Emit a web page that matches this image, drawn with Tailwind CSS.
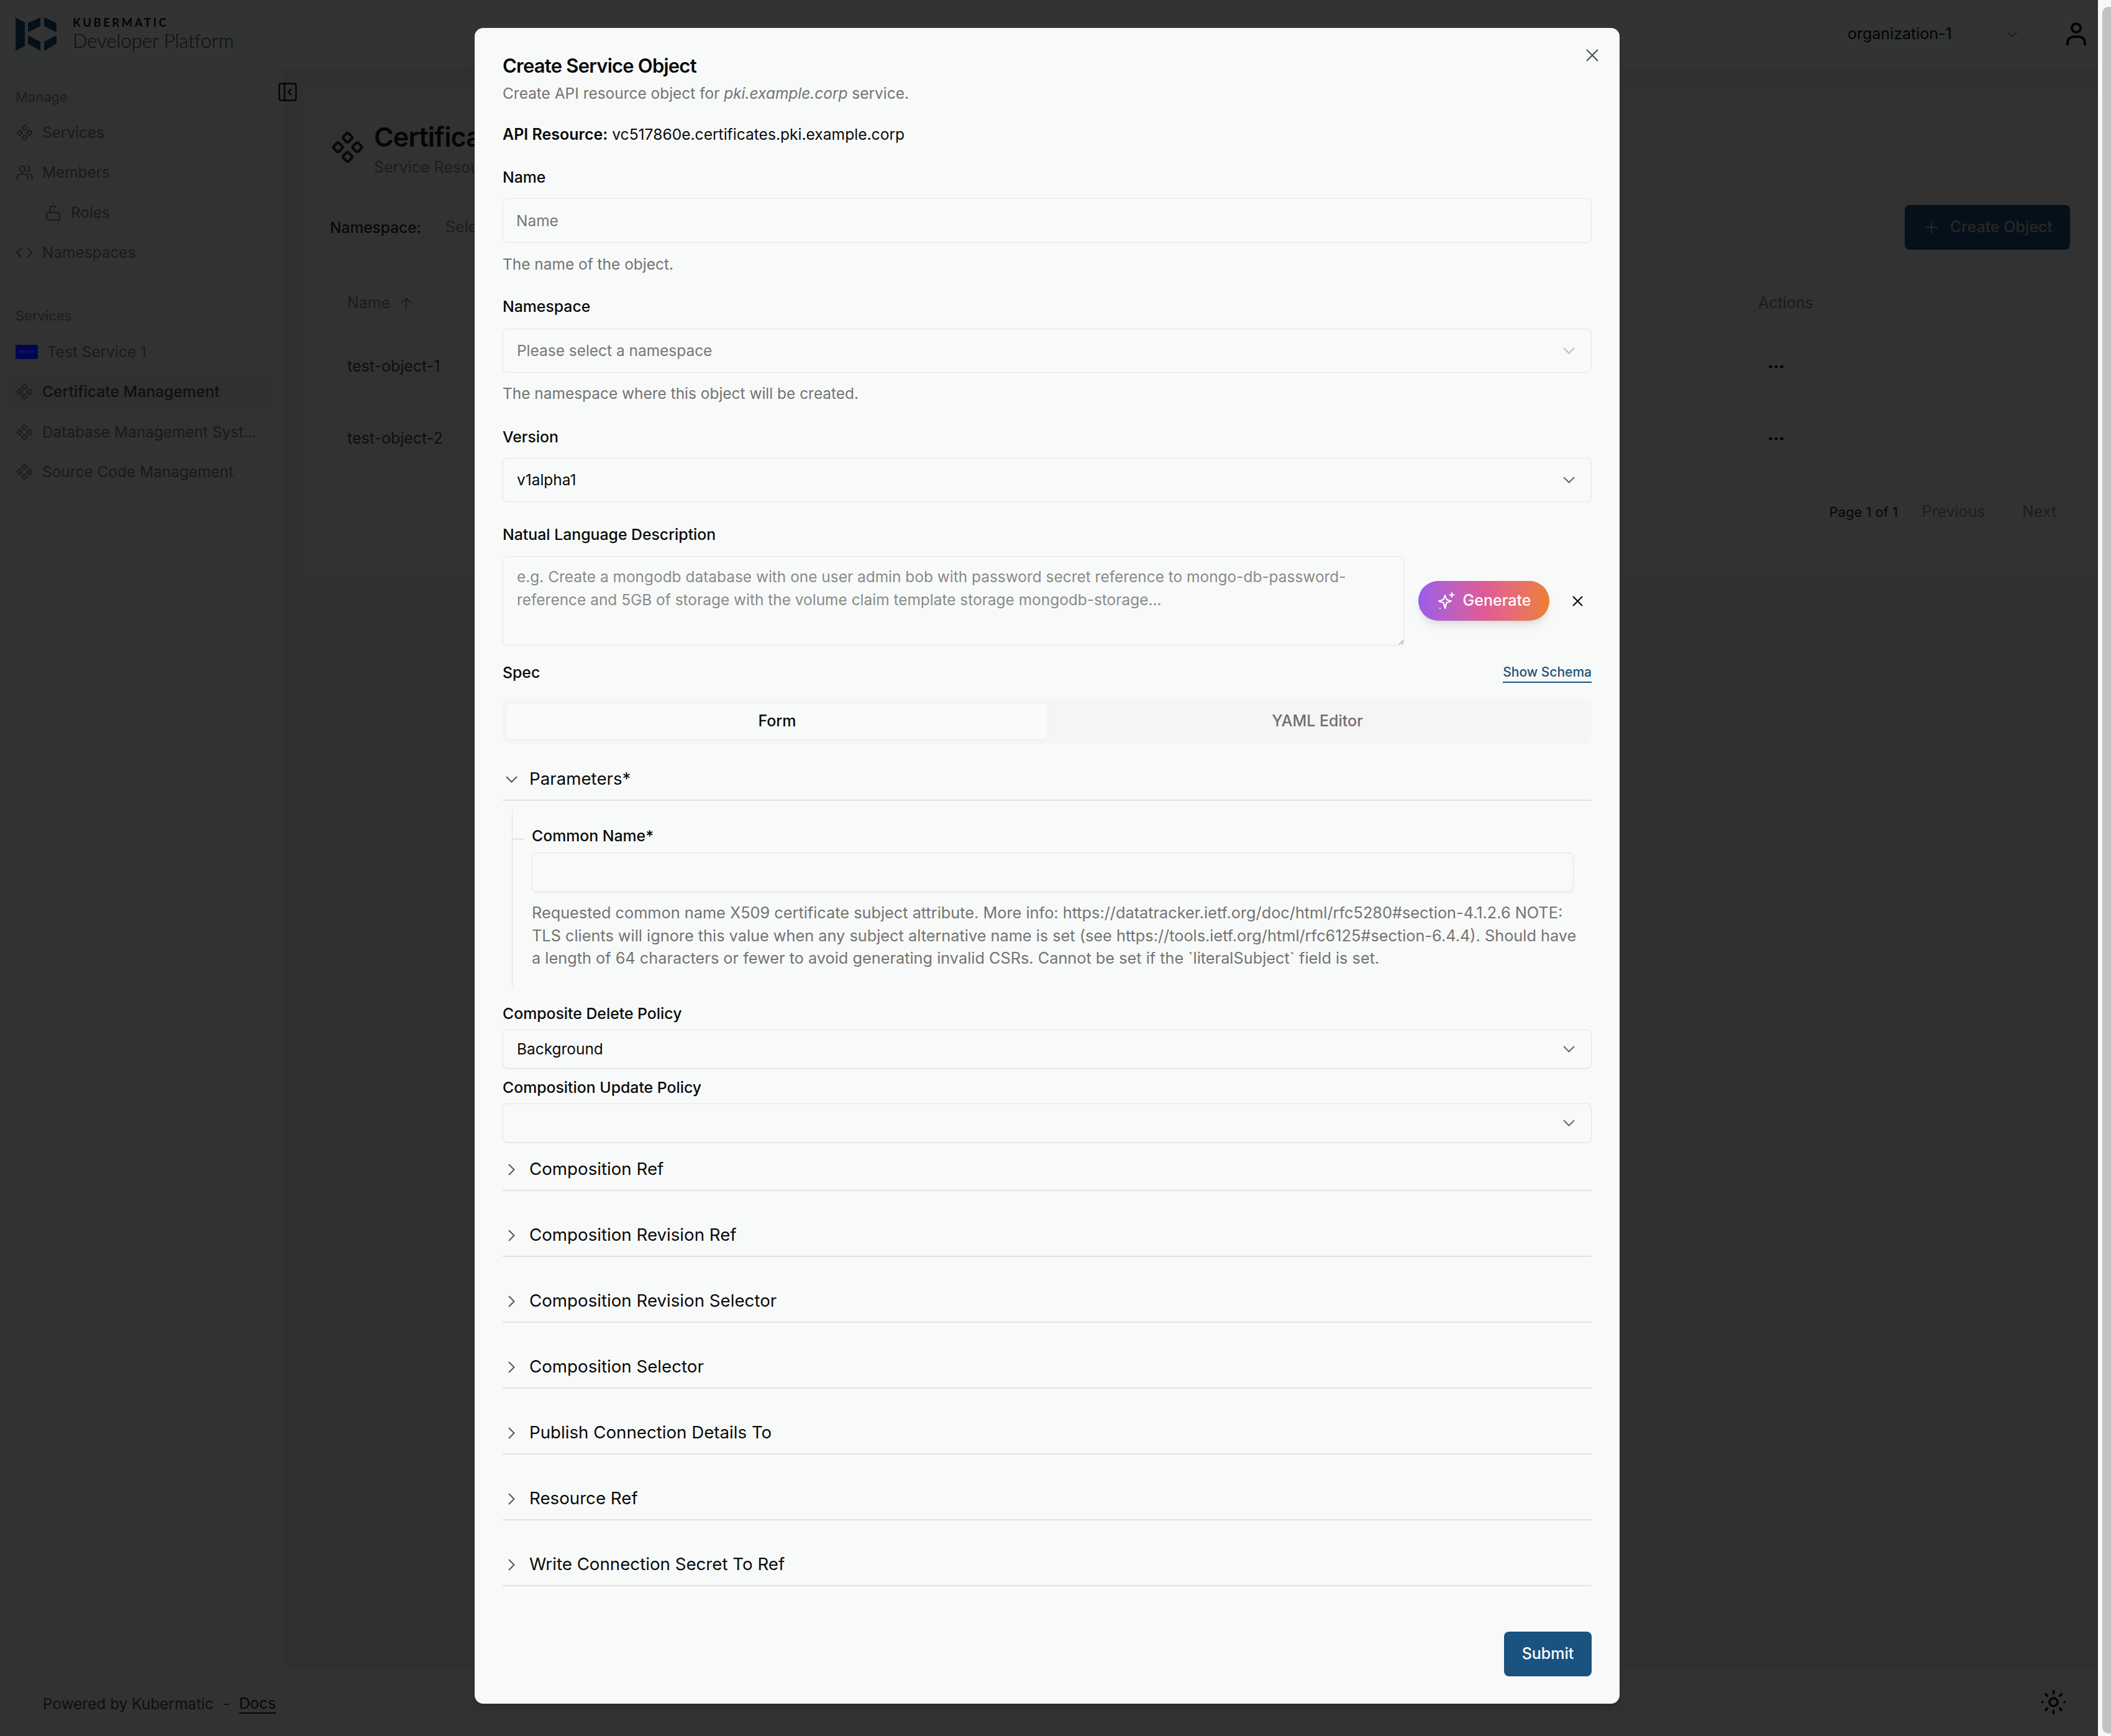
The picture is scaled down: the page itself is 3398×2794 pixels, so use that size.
<!DOCTYPE html>
<html><head><meta charset="utf-8"><script src="https://cdn.jsdelivr.net/npm/@tailwindcss/browser@4"></script></head>
<body class="m-0 bg-[#f7f9f8] font-['Inter',sans-serif] overflow-hidden">
<div class="relative w-[3398px] h-[2794px] overflow-hidden">
  <div class="relative w-[3377px] h-[2794px] flex flex-col bg-[#f0f0f0]">
    <header class="h-[111px] shrink-0 flex items-center bg-[#fbfdfc] border-b border-[#e8e8e8] pl-[25px] pr-[19px]">
      <svg class="w-[66px] h-[54px] shrink-0" viewBox="0 0 66 54" fill="#1a5280"><polygon points="0,0 15,8 15,46 0,54"/><polygon points="20,9 40,0 40,14 20,24"/><polygon points="20,29 40,39 40,54 20,42"/><polygon points="46,0 66,9 66,24 46,14"/><polygon points="46,39 66,29 66,42 46,54"/></svg>
      <div class="ml-[26px] flex flex-col font-['Lato',sans-serif] text-[#3f3f3f]">
        <span class="text-[18.500px] leading-[20px] font-bold tracking-[0.19em] text-[#0e1114]">KUBERMATIC</span>
        <span class="text-[31px] leading-[38px] font-light">Developer Platform</span>
      </div>
      <div class="ml-auto w-[323px] h-[71px] flex items-center justify-between rounded-[8px] border border-[#e6e6e6] pl-[22px] pr-[24px] text-[25px] text-[#111]">
        <span>organization-1</span>
        <svg class="w-[20px] h-[20px] text-[#777]" viewBox="0 0 24 24" fill="none" stroke="currentColor" stroke-width="2"><path d="m3 8 9 9 9-9"/></svg>
      </div>
      <svg class="ml-[52px] w-[32px] h-[38px] text-[#111]" viewBox="0 0 32 38" fill="none" stroke="currentColor" stroke-width="4"><circle cx="16" cy="9" r="7"/><path d="M2 37v-4a10 10 0 0 1 10-10h8a10 10 0 0 1 10 10v4"/></svg>
    </header>
    <div class="flex-1 flex min-h-0">
      <aside class="relative w-[457px] shrink-0 border-r border-[#e6e6e6] bg-[#fafafa] pt-[30px] text-[24.400px] text-[#808080]">
        <div class="h-[30px] pl-[25px] flex items-center text-[22px] text-[#8f8f8f]">Manage</div>
        <nav class="mt-[10px]">
          <div class="h-[64.500px] pl-[26px] flex items-center gap-[15px]"><svg class="w-[27px] h-[27px]" viewBox="0 0 24 24" fill="none" stroke="currentColor" stroke-width="1.8"><rect x="9.300" y="2.300" width="5.400" height="5.400" rx="1" transform="rotate(45 12 5)"/><rect x="2.300" y="9.300" width="5.400" height="5.400" rx="1" transform="rotate(45 5 12)"/><rect x="16.300" y="9.300" width="5.400" height="5.400" rx="1" transform="rotate(45 19 12)"/><rect x="9.300" y="16.300" width="5.400" height="5.400" rx="1" transform="rotate(45 12 19)"/></svg><span>Services</span></div>
          <div class="h-[64.500px] pl-[26px] flex items-center gap-[15px]"><svg class="w-[27px] h-[27px]" viewBox="0 0 24 24" fill="none" stroke="currentColor" stroke-width="1.8"><circle cx="9" cy="7" r="4"/><path d="M1 22v-2a6 6 0 0 1 6-6h4a6 6 0 0 1 6 6v2"/><path d="M16 3.100a4 4 0 0 1 0 7.800"/><path d="M23 22v-2a6 6 0 0 0-4-5.600"/></svg><span>Members</span></div>
          <div class="relative h-[64.500px] pl-[73px] flex items-center gap-[16px]"><span class="absolute left-[38px] top-[-1px] h-[61px] w-px bg-[#dedede]"></span><svg class="w-[25px] h-[27px]" viewBox="0 0 25 27" fill="none" stroke="currentColor" stroke-width="2.200"><rect x="2" y="13" width="21" height="12" rx="2.500"/><path d="M7 13V8a5.500 5.500 0 0 1 10.500-2.200"/></svg><span>Roles</span></div>
          <div class="h-[64.500px] pl-[26px] flex items-center gap-[15px]"><svg class="w-[27px] h-[27px]" viewBox="0 0 24 24" fill="none" stroke="currentColor" stroke-width="1.8"><path d="m8 5-7 7 7 7"/><path d="m16 5 7 7-7 7"/></svg><span>Namespaces</span></div>
        </nav>
        <div class="mt-[54px] h-[30px] pl-[25px] flex items-center text-[22px] text-[#8f8f8f]">Services</div>
        <nav class="mt-[11px]">
          <div class="relative z-60 h-[64.500px] pl-[25px] flex items-center gap-[15px]"><span class="w-[36px] h-[23px] rounded-[3px] bg-[#02064f] flex items-center justify-center text-[5px] text-[#2a3080]">400 × 400</span><span class="text-[#1a1a1a]">Test Service 1</span></div>
          <div class="h-[64.500px] flex items-center"><div class="ml-[10px] w-[431px] h-[56px] rounded-[8px] bg-[#f0f0f0] pl-[16px] flex items-center gap-[15px] font-medium text-[#505050]"><svg class="w-[27px] h-[27px] text-[#808080]" viewBox="0 0 24 24" fill="none" stroke="currentColor" stroke-width="1.8"><rect x="9.300" y="2.300" width="5.400" height="5.400" rx="1" transform="rotate(45 12 5)"/><rect x="2.300" y="9.300" width="5.400" height="5.400" rx="1" transform="rotate(45 5 12)"/><rect x="16.300" y="9.300" width="5.400" height="5.400" rx="1" transform="rotate(45 19 12)"/><rect x="9.300" y="16.300" width="5.400" height="5.400" rx="1" transform="rotate(45 12 19)"/></svg><span class="text-[24.700px]">Certificate Management</span></div></div>
          <div class="h-[64.500px] pl-[26px] flex items-center gap-[15px]"><svg class="w-[27px] h-[27px]" viewBox="0 0 24 24" fill="none" stroke="currentColor" stroke-width="1.8"><rect x="9.300" y="2.300" width="5.400" height="5.400" rx="1" transform="rotate(45 12 5)"/><rect x="2.300" y="9.300" width="5.400" height="5.400" rx="1" transform="rotate(45 5 12)"/><rect x="16.300" y="9.300" width="5.400" height="5.400" rx="1" transform="rotate(45 19 12)"/><rect x="9.300" y="16.300" width="5.400" height="5.400" rx="1" transform="rotate(45 12 19)"/></svg><span>Database Management Syst…</span></div>
          <div class="h-[64.500px] pl-[26px] flex items-center gap-[15px]"><svg class="w-[27px] h-[27px]" viewBox="0 0 24 24" fill="none" stroke="currentColor" stroke-width="1.8"><rect x="9.300" y="2.300" width="5.400" height="5.400" rx="1" transform="rotate(45 12 5)"/><rect x="2.300" y="9.300" width="5.400" height="5.400" rx="1" transform="rotate(45 5 12)"/><rect x="16.300" y="9.300" width="5.400" height="5.400" rx="1" transform="rotate(45 19 12)"/><rect x="9.300" y="16.300" width="5.400" height="5.400" rx="1" transform="rotate(45 12 19)"/></svg><span>Source Code Management</span></div>
        </nav>
        <svg class="absolute left-[448px] top-[22px] w-[30px] h-[30px] text-[#222] z-10" viewBox="0 0 30 30" fill="none" stroke="currentColor" stroke-width="2.600"><rect x="1.500" y="1.500" width="27" height="27" rx="2.500"/><path d="M10 2v26"/><path d="m21 10-5 5 5 5"/></svg>
      </aside>
      <main class="flex-1 pl-[30px] pt-[30px] min-w-0">
        <div class="rounded-[10px] border border-[#e8e8e8] bg-[#fafafa] pt-[56px] pl-[43px] pr-[44px] pb-[75px]">
          <div class="flex items-start">
            <svg class="mt-[12px] ml-[2px] w-[53px] h-[54px] text-[#333]" viewBox="0 0 24 24" fill="none" stroke="currentColor" stroke-width="2"><rect x="9.300" y="2.300" width="5.400" height="5.400" rx="1" transform="rotate(45 12 5)"/><rect x="2.300" y="9.300" width="5.400" height="5.400" rx="1" transform="rotate(45 5 12)"/><rect x="16.300" y="9.300" width="5.400" height="5.400" rx="1" transform="rotate(45 19 12)"/><rect x="9.300" y="16.300" width="5.400" height="5.400" rx="1" transform="rotate(45 12 19)"/></svg>
            <div class="ml-[16px]">
              <div class="h-[44px] leading-[44px] text-[43px] font-semibold tracking-[-0.02em] text-[#1c1c1c]">Certificate Management</div>
              <div class="mt-[5px] h-[44px] leading-[44px] text-[25px] text-[#909090]">Service Resources</div>
            </div>
          </div>
          <div class="mt-[39px] h-[72px] flex items-center justify-between">
            <div class="flex items-center"><span class="text-[24.500px] font-medium text-[#303030]">Namespace:</span><div class="ml-[16px] w-[500px] h-[71px] rounded-[8px] border border-[#e6e6e6] pl-[22px] flex items-center text-[25px] text-[#909090]">Select</div></div>
            <div class="w-[266px] h-[72px] rounded-[8px] bg-[#1a5280] flex items-center pl-[33px] gap-[20px] text-[25px] font-medium text-[#c4c4c4]"><svg class="w-[20px] h-[20px]" viewBox="0 0 20 20" fill="none" stroke="currentColor" stroke-width="2"><path d="M10 0v20M0 10h20"/></svg><span>Create Object</span></div>
          </div>
          <div class="mt-[43px] h-[87px] border-b border-[#e8e8e8] flex items-center pl-[28px] text-[25px] text-[#8c8c8c]"><span class="flex-1 flex items-center gap-[16px]">Name <svg class="w-[20px] h-[20px]" viewBox="0 0 20 20" fill="none" stroke="currentColor" stroke-width="1.8"><path d="M10 19V2M2 10l8-8 8 8"/></svg></span><span class="w-[502px]">Actions</span></div>
          <div class="h-[116px] border-b border-[#e8e8e8] flex items-center pl-[28px] text-[25px] text-[#484848]"><span class="flex-1">test-object-1</span><div class="w-[502px]"><div class="w-[57px] h-[58px] rounded-[8px] border border-[#e6e6e6] flex items-center justify-center"><svg class="w-[24px] h-[6px] text-[#111]" viewBox="0 0 24 6" fill="currentColor"><circle cx="3" cy="3" r="2.600"/><circle cx="12" cy="3" r="2.600"/><circle cx="21" cy="3" r="2.600"/></svg></div></div></div>
          <div class="h-[116px] flex items-center pl-[28px] text-[25px] text-[#484848]"><span class="flex-1">test-object-2</span><div class="w-[502px]"><div class="w-[57px] h-[58px] rounded-[8px] border border-[#e6e6e6] flex items-center justify-center"><svg class="w-[24px] h-[6px] text-[#111]" viewBox="0 0 24 6" fill="currentColor"><circle cx="3" cy="3" r="2.600"/><circle cx="12" cy="3" r="2.600"/><circle cx="21" cy="3" r="2.600"/></svg></div></div></div>
          <div class="mt-[28px] h-[64px] flex items-center justify-end text-[22px]">
            <span class="mr-[14px] text-[#222]">Page 1 of 1</span>
            <div class="w-[147px] h-[64px] rounded-[8px] border border-[#ececec] flex items-center justify-center pl-[4px] text-[25px] text-[#989898]">Previous</div>
            <div class="ml-[17px] w-[99px] h-[64px] rounded-[8px] border border-[#ececec] flex items-center justify-center text-[25px] text-[#989898]">Next</div>
          </div>
        </div>
      </main>
    </div>
    <footer class="h-[110px] shrink-0 border-t border-[#e8e8e8] bg-[#f7f9f8] flex items-center justify-between pl-[69px] pr-[52px] pt-[6px] text-[24.400px] text-[#4a4a4a]">
      <div class="flex items-center"><span>Powered by Kubermatic</span><span class="mx-[15px]">-</span><span class="border-b-2 border-[#222] leading-[30px] text-[#222]">Docs</span></div>
      <svg class="w-[39px] h-[39px] -mt-[6px] text-[#111]" viewBox="0 0 24 24" fill="none" stroke="currentColor" stroke-width="2.200" stroke-linecap="round"><circle cx="12" cy="12" r="4"/><path d="M12 1v2.500M12 20.500V23M4.200 4.200l1.500 1.500M18.300 18.300l1.500 1.500M1 12h.1M22.900 12h.1M4.200 19.800l1.500-1.500M18.300 5.700l1.500-1.500"/></svg>
    </footer>
    <div class="absolute inset-0 bg-black/80 z-40"></div>
    <!-- dialog -->
    <div class="absolute left-[764px] top-[45px] w-[1843px] h-[2697px] z-50 rounded-[14px] bg-[#f8faf9] shadow-lg px-[45px] text-[24.450px] text-[#0a0a0a]">
      <svg class="absolute right-[34px] top-[34px] w-[20px] h-[20px] text-[#444b52]" viewBox="0 0 20 20" fill="none" stroke="currentColor" stroke-width="2"><path d="M1 1l18 18M19 1 1 19"/></svg>
      <div class="pt-[39px] h-[83px] text-[31px] leading-[44px] font-semibold tracking-[-0.025em]">Create Service Object</div>
      <div class="h-[45px] leading-[45px] text-[#737373]">Create API resource object for <em>pki.example.corp</em> service.</div>
      <div class="mt-[23px] h-[40px] flex items-baseline gap-[7px] leading-[40px] text-[24.600px]"><strong class="text-[25px] font-semibold">API Resource:</strong><span>vc517860e.certificates.pki.example.corp</span></div>
      <div class="mt-[31px] h-[36px] leading-[36px] text-[24.800px] font-medium">Name</div>
      <input class="mt-[16px] block w-full h-[72px] rounded-[8px] border-[1.500px] border-[#e4e6e6] px-[21px] outline-none placeholder:text-[#777]" placeholder="Name">
      <div class="mt-[16px] h-[36px] leading-[36px] text-[#737373]">The name of the object.</div>
      <div class="mt-[32px] h-[36px] leading-[36px] text-[24.800px] font-medium">Namespace</div>
      <div class="mt-[18px] h-[71px] rounded-[8px] border border-[#e2e4e4] pl-[22px] pr-[26px] flex items-center justify-between text-[#777]"><span>Please select a namespace</span><svg class="w-[19px] h-[11px] text-[#bbb]" viewBox="0 0 19 11" fill="none" stroke="currentColor" stroke-width="2"><path d="m1 1 8.500 8.500L18 1"/></svg></div>
      <div class="mt-[15px] h-[36px] leading-[36px] text-[#737373]">The namespace where this object will be created.</div>
      <div class="mt-[34px] h-[36px] leading-[36px] text-[24.800px] font-medium">Version</div>
      <div class="mt-[16px] h-[71px] rounded-[8px] border border-[#e2e4e4] pl-[22px] pr-[26px] flex items-center justify-between"><span>v1alpha1</span><svg class="w-[19px] h-[11px] text-[#666]" viewBox="0 0 19 11" fill="none" stroke="currentColor" stroke-width="2"><path d="m1 1 8.500 8.500L18 1"/></svg></div>
      <div class="mt-[34px] h-[36px] leading-[36px] text-[24.800px] font-medium">Natual Language Description</div>
      <div class="mt-[17px] h-[144px] flex items-center">
        <textarea class="w-[1452px] h-[144px] rounded-[8px] border border-[#e2e4e4] px-[22px] py-[14px] leading-[37px] outline-none placeholder:text-[#8a8a8a]" placeholder="e.g. Create a mongodb database with one user admin bob with password secret reference to mongo-db-password-reference and 5GB of storage with the volume claim template storage mongodb-storage..."></textarea>
        <div class="ml-[22px] w-[211px] h-[64px] rounded-full bg-linear-to-r from-[#9a5ce8] via-[#df5a97] to-[#ee7f2e] shadow-lg flex items-center justify-center gap-[12px] text-[25px] font-medium text-white"><svg class="w-[30px] h-[30px]" viewBox="0 0 30 30" fill="none" stroke="currentColor" stroke-width="2.200" stroke-linecap="round" stroke-linejoin="round"><path d="M13 6 15.500 13 23 15.500 15.500 18 13 27 10.500 18 3 15.500 10.500 13z"/><path d="M24 2v7M20.500 5.500h7"/><path d="M5 27h.1"/></svg><span>Generate</span></div>
        <svg class="ml-[37px] w-[17px] h-[17px] text-[#0a0a0a]" viewBox="0 0 17 17" fill="none" stroke="currentColor" stroke-width="2.200"><path d="M1 1l15 15M16 1 1 16"/></svg>
      </div>
      <div class="mt-[26px] h-[36px] flex items-center justify-between text-[24.800px] font-medium"><span>Spec</span><span class="text-[21px] leading-[30px] font-medium text-[#1a5280] border-b-2 border-[#1a5280]">Show Schema</span></div>
      <div class="mt-[24px] h-[72px] rounded-[8px] bg-[#f6f5f5] px-[7px] flex items-center text-[25px]">
        <div class="w-[870px] h-[57px] rounded-[6px] bg-[#f9fafa] shadow-xs flex items-center justify-center font-medium">Form</div>
        <div class="flex-1 flex items-center justify-center font-medium text-[#6f6f6f]">YAML Editor</div>
      </div>
      <div class="mt-[26px] h-[66px] border-b-2 border-[#e2e4e4] pb-[2px] flex items-center text-[27.700px]"><svg class="ml-[5px] w-[19px] h-[11px] text-[#555]" viewBox="0 0 19 11" fill="none" stroke="currentColor" stroke-width="2"><path d="m1 1 8.500 8.500L18 1"/></svg><span class="ml-[19px]">Parameters*</span></div>
      <div class="relative mt-[15px] ml-[15px] mr-[29px] h-[284px] border-l border-[#dfe1e1] pl-[31px] pt-[23px]">
        <span class="absolute left-0 top-[46px] w-[18px] h-px bg-[#c9cccc]"></span>
        <div class="h-[36px] leading-[36px] text-[24.800px] font-medium">Common Name*</div>
        <input class="mt-[9px] block w-full h-[64px] rounded-[8px] border border-[#e2e4e4] shadow-xs outline-none">
        <p class="mt-[15px] -mr-[8px] text-[25.300px] leading-[36.500px] text-[#737373]">Requested common name X509 certificate subject attribute. More info: https://datatracker.ietf.org/doc/html/rfc5280#section-4.1.2.6 NOTE: TLS clients will ignore this value when any subject alternative name is set (see https://tools.ietf.org/html/rfc6125#section-6.4.4). Should have a length of 64 characters or fewer to avoid generating invalid CSRs. Cannot be set if the `literalSubject` field is set.</p>
      </div>
      <div class="mt-[25px] h-[36px] leading-[36px] text-[24.800px] font-medium">Composite Delete Policy</div>
      <div class="mt-[8px] h-[63px] rounded-[8px] border border-[#e2e4e4] shadow-xs pl-[22px] pr-[26px] flex items-center justify-between"><span>Background</span><svg class="w-[19px] h-[11px] text-[#666]" viewBox="0 0 19 11" fill="none" stroke="currentColor" stroke-width="2"><path d="m1 1 8.500 8.500L18 1"/></svg></div>
      <div class="mt-[12px] h-[36px] leading-[36px] text-[24.800px] font-medium">Composition Update Policy</div>
      <div class="mt-[8px] h-[63px] rounded-[8px] border border-[#e2e4e4] shadow-xs pl-[22px] pr-[26px] flex items-center justify-end"><svg class="w-[19px] h-[11px] text-[#666]" viewBox="0 0 19 11" fill="none" stroke="currentColor" stroke-width="2"><path d="m1 1 8.500 8.500L18 1"/></svg></div>
      <div class="mt-[12px] flex flex-col gap-[40px] text-[27.700px]">
        <div class="h-[66px] border-b-2 border-[#e2e4e4] pb-[2px] flex items-center"><svg class="ml-[9px] w-[11px] h-[19px] text-[#555]" viewBox="0 0 11 19" fill="none" stroke="currentColor" stroke-width="2"><path d="m1 1 8.500 8.500L1 18"/></svg><span class="ml-[23px]">Composition Ref</span></div>
        <div class="h-[66px] border-b-2 border-[#e2e4e4] pb-[2px] flex items-center"><svg class="ml-[9px] w-[11px] h-[19px] text-[#555]" viewBox="0 0 11 19" fill="none" stroke="currentColor" stroke-width="2"><path d="m1 1 8.500 8.500L1 18"/></svg><span class="ml-[23px]">Composition Revision Ref</span></div>
        <div class="h-[66px] border-b-2 border-[#e2e4e4] pb-[2px] flex items-center"><svg class="ml-[9px] w-[11px] h-[19px] text-[#555]" viewBox="0 0 11 19" fill="none" stroke="currentColor" stroke-width="2"><path d="m1 1 8.500 8.500L1 18"/></svg><span class="ml-[23px]">Composition Revision Selector</span></div>
        <div class="h-[66px] border-b-2 border-[#e2e4e4] pb-[2px] flex items-center"><svg class="ml-[9px] w-[11px] h-[19px] text-[#555]" viewBox="0 0 11 19" fill="none" stroke="currentColor" stroke-width="2"><path d="m1 1 8.500 8.500L1 18"/></svg><span class="ml-[23px]">Composition Selector</span></div>
        <div class="h-[66px] border-b-2 border-[#e2e4e4] pb-[2px] flex items-center"><svg class="ml-[9px] w-[11px] h-[19px] text-[#555]" viewBox="0 0 11 19" fill="none" stroke="currentColor" stroke-width="2"><path d="m1 1 8.500 8.500L1 18"/></svg><span class="ml-[23px]">Publish Connection Details To</span></div>
        <div class="h-[66px] border-b-2 border-[#e2e4e4] pb-[2px] flex items-center"><svg class="ml-[9px] w-[11px] h-[19px] text-[#555]" viewBox="0 0 11 19" fill="none" stroke="currentColor" stroke-width="2"><path d="m1 1 8.500 8.500L1 18"/></svg><span class="ml-[23px]">Resource Ref</span></div>
        <div class="h-[66px] border-b-2 border-[#e2e4e4] pb-[2px] flex items-center"><svg class="ml-[9px] w-[11px] h-[19px] text-[#555]" viewBox="0 0 11 19" fill="none" stroke="currentColor" stroke-width="2"><path d="m1 1 8.500 8.500L1 18"/></svg><span class="ml-[23px]">Write Connection Secret To Ref</span></div>
      </div>
      <div class="mt-[73px] flex justify-end"><div class="w-[141px] h-[72px] rounded-[8px] bg-[#1a5280] flex items-center justify-center text-[25px] font-medium text-white">Submit</div></div>
    </div>
  </div>
  <div class="absolute right-0 top-[11px] bottom-[4px] w-[14px] rounded-l-[10px] bg-[#c2c2c2]"></div>
</div>
</body></html>
